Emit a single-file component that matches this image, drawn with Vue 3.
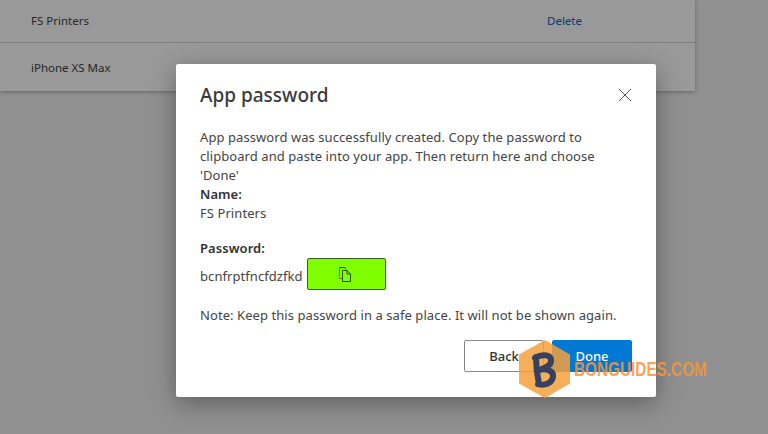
<template>
  <div class="page">
    <div class="list">
      <div class="row row-first">
        <span>FS Printers</span>
        <a class="del">Delete</a>
      </div>
      <div class="row">
        <span>iPhone XS Max</span>
        <a class="del">Delete</a>
      </div>
    </div>

    <div class="overlay">
      <div class="modal">
        <div class="head">
          <h2>App password</h2>
          <svg class="close" width="14" height="14" viewBox="0 0 14 14">
            <path d="M1 1 L13 13 M13 1 L1 13" stroke="#555" stroke-width="1" fill="none" />
          </svg>
        </div>
        <div class="body">
          <p>App password was successfully created. Copy the password to clipboard and paste into your app. Then return here and choose 'Done'</p>
          <p class="b">Name:</p>
          <p>FS Printers</p>
          <p class="b pw-label">Password:</p>
          <div class="pw-row">
            <span class="pw">bcnfrptfncfdzfkd</span>
            <button class="copy">
              <svg width="14" height="16" viewBox="0 0 14 16" fill="none">
                <path d="M6 1.500 H1.500 V12.500 H4" stroke="#8a6a1c" />
                <path d="M1.500 1.500 H7 L8 3.500" stroke="#33502a" />
                <path d="M4.500 4.500 H9 L12.500 8 V15.500 H4.500 Z M9 4.500 V8 H12.500" stroke="#2f4a22" />
              </svg>
            </button>
          </div>
          <p class="note">Note: Keep this password in a safe place. It will not be shown again.</p>
        </div>
        <div class="foot">
          <button class="btn back">Back</button>
          <button class="btn done">Done</button>
        </div>
      </div>
    </div>

    <div class="mark">
      <svg width="60" height="58" viewBox="0 0 60 58">
        <path d="M30 0 L55 14.500 V43.500 L30 58 L4 43.500 V14.500 Z" fill="#f5a03c" fill-opacity="0.85" />
        <path d="M21 17 C21 26 22 35 24 44 M20 18 C28 13 37 15 36 21 C36 26 30 28 24 30 C32 28 39 31 38 37 C37 43 30 46 23 44" fill="none" stroke="#36415f" stroke-width="6" stroke-linecap="round" stroke-linejoin="round" />
      </svg>
      <span class="mark-text">BONGUIDES.COM</span>
    </div>
  </div>
</template>

<script setup>
</script>

<style>
html, body {
  margin: 0;
  height: 100%;
  overflow: hidden;
}
</style>

<style scoped>
.page {
  position: relative;
  width: 768px;
  height: 434px;
  overflow: hidden;
  background: #f0f0f0;
  font-family: "Noto Sans", "Liberation Sans", sans-serif;
  font-size: 13px;
  color: #444;
}

.list {
  width: 695px;
  background: #fff;
  box-shadow: 0 1px 4px rgba(0, 0, 0, 0.3);
}

.row {
  height: 48px;
  display: flex;
  align-items: center;
  justify-content: space-between;
  padding: 0 148px 0 31px;
  font-size: 11.5px;
}

.row-first {
  height: 43px;
  padding-bottom: 2px;
  border-bottom: 1px solid #d8d8d8;
  box-sizing: border-box;
}

.del {
  color: #0364b8;
  width: 0;
  white-space: nowrap;
}

.overlay {
  position: absolute;
  inset: 0;
  background: rgba(0, 0, 0, 0.4);
  padding: 64px 0 0 176px;
}

.modal {
  width: 480px;
  height: 333px;
  box-sizing: border-box;
  background: #fff;
  border-radius: 2px;
  padding: 18px 24px 0;
  box-shadow: 0 6px 24px rgba(0, 0, 0, 0.35);
}

.head {
  display: flex;
  align-items: center;
  justify-content: space-between;
  height: 26px;
}

h2 {
  margin: 0;
  font-size: 19px;
  font-weight: 500;
  line-height: 26px;
  color: #3b3a39;
}

.body {
  margin-top: 20px;
  line-height: 19px;
  letter-spacing: 0.07px;
}

p {
  margin: 0;
}

.b {
  font-weight: 600;
  color: #323130;
}

.pw-label {
  margin-top: 16px;
}

.pw-row {
  display: flex;
  align-items: center;
  gap: 4px;
}

.pw {
  margin-top: 4px;
}

.copy {
  width: 79px;
  height: 32px;
  box-sizing: border-box;
  padding: 0 2px 0 0;
  display: flex;
  align-items: center;
  justify-content: center;
  background: #80ff00;
  border: 1px solid #3f5a2a;
  border-radius: 2px;
}

.note {
  margin-top: 16px;
}

.foot {
  display: flex;
  justify-content: flex-end;
  gap: 8px;
  margin-top: 15px;
}

.btn {
  width: 80px;
  height: 32px;
  box-sizing: border-box;
  border-radius: 2px;
  font: 500 13px "Noto Sans", "Liberation Sans", sans-serif;
  padding: 0;
}

.back {
  background: #fff;
  border: 1px solid #8a8886;
  color: #323130;
}

.done {
  background: #0078d4;
  border: 1px solid #0078d4;
  color: #fff;
}

.mark {
  position: absolute;
  left: 515px;
  top: 340px;
  display: flex;
  align-items: flex-start;
}

.mark-text {
  margin: 17px 0 0 -1px;
  font: 700 21px "Liberation Sans Narrow", "Liberation Sans", sans-serif;
  color: #f5963c;
  opacity: 0.85;
  transform: scaleX(0.73);
  transform-origin: left center;
}
</style>
